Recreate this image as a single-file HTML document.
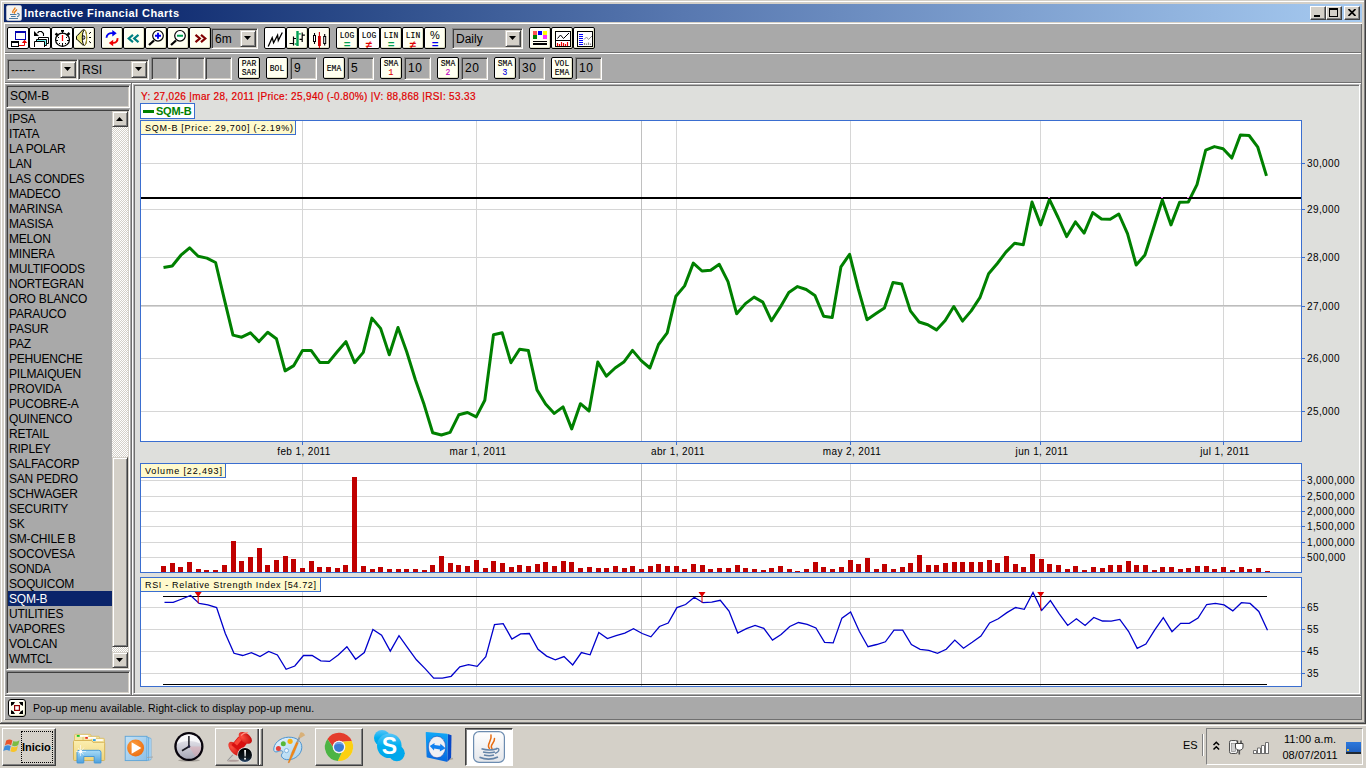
<!DOCTYPE html><html><head><meta charset="utf-8"><title>Interactive Financial Charts</title><style>
*{box-sizing:border-box;margin:0;padding:0}
html,body{width:1366px;height:768px;overflow:hidden;background:#d4d0c8;font-family:"Liberation Sans",sans-serif;font-size:12px;color:#000}
.a,.r{position:absolute}
.r{height:1px}
#title{left:4px;top:4px;width:1358px;height:18px;background:linear-gradient(90deg,#0a246a 0%,#0c276d 8%,#2f4f8c 28%,#5878b0 50%,#a6caf0 100%)}
#title span{position:absolute;left:20px;top:1px;color:#fff;font-weight:bold;font-size:11px;line-height:17px;white-space:nowrap;letter-spacing:0.42px}
.up{border:1px solid;border-color:#d4d0c8 #404040 #404040 #d4d0c8;box-shadow:inset 1px 1px 0 #fff,inset -1px -1px 0 #808080;background:#d4d0c8}
.cap{position:absolute;top:2px;width:16px;height:14px;border-color:#fff #404040 #404040 #fff!important;box-shadow:inset -1px -1px 0 #808080!important}
.btn{position:absolute;width:22px;height:22px;background:#fffff0;border:1px solid #000;border-radius:2px;box-shadow:inset 1px 1px 0 #fff,inset -1px -1px 0 #e0e0c4;overflow:hidden}
.btn.w{background:#fff;box-shadow:none}
.btn svg{position:absolute;left:-1px;top:-1px}
.btn .t{position:absolute;left:-1px;width:22px;text-align:center;font-family:"Liberation Mono",monospace;font-size:9.5px;line-height:9px;white-space:nowrap;transform:scaleX(.84);-webkit-text-stroke:0.15px #000}
.sunk{position:absolute;border:1px solid;border-color:#868686 #fff #fff #868686;box-shadow:inset 1px 1px 0 #404040,inset -1px -1px 0 #d4d0c8;background:#a9a9a9}
.sunk span{position:absolute;white-space:nowrap;font-size:12px;line-height:14px}
.arrow{position:absolute}
.arrow i{position:absolute;width:7px;height:4px;background:#000;clip-path:polygon(0 0,100% 0,50% 100%)}
.arrow i.u{clip-path:polygon(50% 0,100% 100%,0 100%)}
.li{position:absolute;left:1px;width:104px;height:15px;line-height:17px;font-size:12px;padding-left:1px;white-space:nowrap;overflow:hidden;letter-spacing:-0.2px}
.li.sel{background:#0a246a;color:#fff}
.chk{background-image:conic-gradient(#fff 25%,#d4d0c8 0 50%,#fff 0 75%,#d4d0c8 0);background-size:2px 2px}
.lab{position:absolute;background:#fffacd;border:1px solid #3a6ed0;font-size:9px;line-height:14px;white-space:nowrap;padding-left:4px}
.ax{position:absolute;font-size:10px;line-height:10px;letter-spacing:0.38px;white-space:nowrap}
.tb{position:absolute;top:4px;height:38px;width:48px}
.tb.u{border:1px solid;border-color:#fff #404040 #404040 #fff;box-shadow:inset -1px -1px 0 #808080}
.tb.d{border:1px solid;border-color:#404040 #fff #fff #404040;box-shadow:inset 1px 1px 0 #808080;background:#fff}
</style></head><body>
<i class="r" style="left:1px;top:1px;width:1363px;background:#fff"></i>
<i class="a" style="left:1px;top:1px;width:1px;height:721px;background:#fff"></i>
<i class="a" style="left:1364px;top:0px;width:1px;height:724px;background:#808080"></i>
<i class="a" style="left:1365px;top:0px;width:1px;height:724px;background:#404040"></i>
<i class="r" style="left:1px;top:722px;width:1364px;background:#808080"></i>
<i class="r" style="left:0px;top:723px;width:1366px;background:#404040"></i>
<div id="title" class="a">
<svg class="a" style="left:2px;top:1px" width="16" height="16" viewBox="0 0 16 16"><rect x="0.3" y="0.3" width="15.4" height="15.4" rx="2.2" fill="#f4f3f1" stroke="#b8c0d0" stroke-width=".6"/><path d="M6.8 7.5c-.8-2 1.6-2.6 2.2-4.5M8.4 8.2c-.5-1.6 1.7-2 2.2-3.4" stroke="#e8780c" stroke-width="1.3" fill="none" stroke-linecap="round"/><path d="M4 9.5h6.5M5 11.5h4.7M3 13.5h9" stroke="#4c7ca4" stroke-width="1"/><path d="M11.2 8.3c3 .3 2.4 3-.2 3.4" stroke="#4c7ca4" stroke-width="1.2" fill="none"/></svg>
<span>Interactive Financial Charts</span>
<div class="cap up" style="left:1306px"><i class="a" style="left:3px;top:8px;width:6px;height:2px;background:#000"></i></div>
<div class="cap up" style="left:1322px"><i class="a" style="left:2px;top:1px;width:9px;height:9px;border:1px solid #000;border-top-width:2px"></i></div>
<div class="cap up" style="left:1340px"><svg class="a" style="left:3px;top:2px" width="8" height="7" viewBox="0 0 8 7"><path d="M0.5 0L7.5 7M7.5 0L0.5 7" stroke="#000" stroke-width="1.7"/></svg></div>
</div>
<i class="r" style="left:4px;top:23px;width:1358px;background:#fff"></i>
<i class="a" style="left:4px;top:23px;width:1px;height:697px;background:#fff"></i>
<div class="a" style="left:5px;top:24px;width:1356px;height:695px;background:#a9a9a9"></div>
<i class="a" style="left:1361px;top:24px;width:1px;height:696px;background:#707070"></i>
<i class="r" style="left:5px;top:719px;width:1357px;background:#707070"></i>
<i class="r" style="left:5px;top:52px;width:1356px;background:#707070"></i>
<i class="r" style="left:5px;top:53px;width:1356px;background:#fff"></i>
<i class="r" style="left:5px;top:82px;width:1356px;background:#707070"></i>
<i class="r" style="left:5px;top:83px;width:1356px;background:#fff"></i>
<i class="r" style="left:5px;top:695px;width:1356px;background:#707070"></i>
<i class="r" style="left:5px;top:696px;width:1356px;background:#fff"></i>
<div class="btn w" style="left:7px;top:27px"><svg width="22" height="22" viewBox="0 0 22 22"><rect x="8.5" y="4.5" width="10" height="8" fill="#fbfbfb" stroke="#0000b0"/><rect x="8" y="4" width="11" height="2" fill="#0000b0"/><rect x="4.5" y="14.5" width="7" height="5" fill="#fff" stroke="#000"/><rect x="4" y="14" width="8" height="2" fill="#000"/><path d="M12 18.5h5.5v-3" stroke="#e80000" fill="none"/><path d="M17.5 12.8l2.7 3.2h-5.4z" fill="#e80000"/></svg></div>
<div class="btn w" style="left:29px;top:27px"><svg width="22" height="22" viewBox="0 0 22 22"><path d="M5 4v5h5z" fill="#000"/><path d="M8.5 6l1.5-1.5h2.5l2 2v2.5" stroke="#000" fill="none" stroke-width="1.1"/><path d="M9.5 12v-1.5h10v6h-1.5" stroke="#000" fill="#fff"/><path d="M7.5 14v-1.5h10v6h-1.5" stroke="#000" fill="#fff"/><path d="M8 13.5h8.5v4.5" stroke="#70f0f0" stroke-width="1.2" fill="none"/><path d="M5.5 20v-5.5h10v5.5" stroke="#000" fill="#fff"/></svg></div>
<div class="btn w" style="left:51px;top:27px"><svg width="22" height="22" viewBox="0 0 22 22"><ellipse cx="11.5" cy="12.7" rx="6.9" ry="6.6" fill="#fff" stroke="#000" stroke-width="1.3"/><rect x="10" y="3" width="3" height="1.8" fill="#000"/><rect x="11" y="4" width="1" height="2.5" fill="#000"/><path d="M4.5 6.5l2.8 2.3M18.5 6l-2.8 2.6" stroke="#000" stroke-width="2.4"/><path d="M11.5 8v6" stroke="#ff0000" stroke-width="1.3"/><path d="M11.5 16v3M5 13.5h2M16 13.5h2" stroke="#000"/><path d="M7 10h1v1h-1zM15 10h1v1h-1zM8 16h1v1h-1zM14 16h1v1h-1z" fill="#000"/></svg></div>
<div class="btn" style="left:73px;top:27px"><svg width="22" height="22" viewBox="0 0 22 22"><path d="M3.5 9.2v3.2l1 .5 5.2 5h1.6v-15h-1.6l-5.2 5.5z" fill="#e8e478" stroke="#000" stroke-width="1"/><ellipse cx="11.5" cy="10.8" rx="2.2" ry="7.6" fill="#fff" stroke="#000" stroke-width="1"/><path d="M11.8 3.3a2.2 7.6 0 0 1 0 15" stroke="#b8a828" fill="none" stroke-width="1"/><ellipse cx="10.8" cy="10.5" rx="1" ry="1.9" fill="#fff" stroke="#000" stroke-width=".9"/><path d="M16 6.8l2-1.7M16 10.5h2M16 14.3l2 1.7" stroke="#000" stroke-width="1"/></svg></div>
<div class="btn" style="left:101px;top:27px"><svg width="22" height="22" viewBox="0 0 22 22"><path d="M5.5 10.8c0-3.6 3-5.2 6.5-4.5" stroke="#0000f0" stroke-width="1.9" fill="none"/><path d="M11.3 3l4.4 3.3-4.4 3.3z" fill="#0000f0"/><path d="M16.5 11.2c0.4 3.2-2 5-5 4.6" stroke="#f00000" stroke-width="1.9" fill="none"/><path d="M12.2 12.8l-4.4 3.2 4.4 3.2z" fill="#f00000"/></svg></div>
<div class="btn" style="left:123px;top:27px"><svg width="22" height="22" viewBox="0 0 22 22"><path d="M10 7.8l-4.3 3.7 4.3 3.7M15.5 7.8l-4.3 3.7 4.3 3.7" stroke="#008080" stroke-width="2.2" fill="none"/></svg></div>
<div class="btn" style="left:145px;top:27px"><svg width="22" height="22" viewBox="0 0 22 22"><path d="M9 13.5l-5 4.5" stroke="#000" stroke-width="2.3"/><circle cx="13" cy="8.8" r="5.3" fill="#fff" stroke="#000" stroke-width="1.2"/><path d="M10 8.8h6M13 5.8v6" stroke="#0000f0" stroke-width="1.9"/></svg></div>
<div class="btn" style="left:167px;top:27px"><svg width="22" height="22" viewBox="0 0 22 22"><path d="M9 13.5l-5 4.5" stroke="#000" stroke-width="2.3"/><circle cx="13" cy="8.8" r="5.3" fill="#fff" stroke="#000" stroke-width="1.2"/><path d="M10 8.8h6" stroke="#00a050" stroke-width="1.9"/></svg></div>
<div class="btn" style="left:189px;top:27px"><svg width="22" height="22" viewBox="0 0 22 22"><path d="M6.5 7.8l4.3 3.7-4.3 3.7M12 7.8l4.3 3.7-4.3 3.7" stroke="#800000" stroke-width="2.2" fill="none"/></svg></div>
<div class="btn w" style="left:264px;top:27px"><svg width="22" height="22" viewBox="0 0 22 22"><path d="M4.2 19.5l4-8.8 1.4 5 4-7.5 .7 5.3 4-8" stroke="#000" stroke-width="1.3" fill="none"/></svg></div>
<div class="btn" style="left:286px;top:27px"><svg width="22" height="22" viewBox="0 0 22 22"><path d="M7.5 9.5v9M3.5 16.5h4M7.5 11.5h2.5" stroke="#000" stroke-width="1.2"/><path d="M11.5 4v15" stroke="#00a050" stroke-width="2.4"/><path d="M8.7 17h2M12.5 6.8h2.3" stroke="#00a050" stroke-width="1.3"/><path d="M16.2 5.5v9.5M13.5 12.3h2.7M16.2 8.2h2.7" stroke="#000" stroke-width="1.2"/></svg></div>
<div class="btn" style="left:308px;top:27px"><svg width="22" height="22" viewBox="0 0 22 22"><path d="M6.5 6v11M16.7 7v11.5" stroke="#000" stroke-width="1.1"/><rect x="5.5" y="8.5" width="2" height="6" fill="#fff" stroke="#000" stroke-width="1"/><path d="M11.4 5v16" stroke="#d00000" stroke-width="1.1"/><rect x="10" y="9" width="2.8" height="10" fill="#d00000"/><rect x="15.7" y="9.5" width="2" height="7" fill="#fff" stroke="#000" stroke-width="1"/></svg></div>
<div class="btn" style="left:529px;top:27px"><svg width="22" height="22" viewBox="0 0 22 22"><rect x="4" y="4" width="4" height="4" fill="#ff5050"/><rect x="9" y="4" width="4" height="4" fill="#0000ff"/><rect x="14" y="4" width="4" height="4" fill="#ffff00"/><rect x="4" y="8" width="4" height="4" fill="#008000"/><rect x="9" y="8" width="4" height="4" fill="#fff"/><rect x="14" y="8" width="4" height="4" fill="#ff30ff"/><rect x="4" y="14" width="14" height="1" fill="#000"/><rect x="4" y="16" width="14" height="2" fill="#000"/></svg></div>
<div class="btn" style="left:551px;top:27px"><svg width="22" height="22" viewBox="0 0 22 22"><rect x="4.5" y="4.5" width="15" height="15" fill="#fff" stroke="#000"/><path d="M4.5 13.5h15" stroke="#000"/><path d="M6.5 11.5l3-3.5 3 3.5 5.5-5.5" stroke="#000" fill="none"/><path d="M6.5 19v-3M8.5 19v-2M10.5 19v-4M12.5 19v-3M14.5 19v-2M16.5 19v-4" stroke="#f00000" stroke-width="1.2"/></svg></div>
<div class="btn" style="left:573px;top:27px"><svg width="22" height="22" viewBox="0 0 22 22"><rect x="4.5" y="4.5" width="15" height="15" fill="#fff" stroke="#000"/><path d="M6 7.5h4M6 9.5h4M6 11.5h4M6 13.5h4M6 15.5h4M6 17.5h4" stroke="#0000ff" stroke-width="1.2"/><path d="M11 12.5l2.5-2.5 2 2.5 3.5-3.5" stroke="#909090" fill="none"/><path d="M11.5 18v-2M13.5 18v-1.5M15.5 18v-2.5M17.5 18v-1.5" stroke="#909090" stroke-width="1.2"/></svg></div>
<div class="btn" style="left:336px;top:27px"><div class="t" style="top:11px;color:#00a050;font-family:'Liberation Sans',sans-serif;font-size:10px;font-weight:bold;line-height:12px;transform:scaleX(1.15);-webkit-text-stroke:0">=</div><div class="t" style="top:3px">LOG</div></div>
<div class="btn w" style="left:358px;top:27px"><div class="t" style="top:11px;color:#e00000;font-family:'Liberation Sans',sans-serif;font-size:10px;font-weight:bold;line-height:12px;transform:scaleX(1.15);-webkit-text-stroke:0">≠</div><div class="t" style="top:3px">LOG</div></div>
<div class="btn" style="left:380px;top:27px"><div class="t" style="top:11px;color:#00a050;font-family:'Liberation Sans',sans-serif;font-size:10px;font-weight:bold;line-height:12px;transform:scaleX(1.15);-webkit-text-stroke:0">=</div><div class="t" style="top:3px">LIN</div></div>
<div class="btn" style="left:402px;top:27px"><div class="t" style="top:11px;color:#e00000;font-family:'Liberation Sans',sans-serif;font-size:10px;font-weight:bold;line-height:12px;transform:scaleX(1.15);-webkit-text-stroke:0">≠</div><div class="t" style="top:3px">LIN</div></div>
<div class="btn" style="left:424px;top:27px"><div class="t" style="top:11px;color:#0000f0;font-family:'Liberation Sans',sans-serif;font-size:10px;font-weight:bold;line-height:12px;transform:scaleX(1.15);-webkit-text-stroke:0">=</div><div class="t" style="top:2px;font-family:'Liberation Sans',sans-serif;font-size:11px;line-height:10px;transform:none;-webkit-text-stroke:0">%</div></div>
<div class="sunk" style="left:211px;top:28px;width:47px;height:21px"><span style="left:3px;top:3px">6m</span><div class="arrow up" style="left:28px;top:1px;width:16px;height:17px"><i class="" style="left:3px;top:5px"></i></div></div>
<div class="sunk" style="left:452px;top:28px;width:71px;height:21px"><span style="left:3px;top:3px">Daily</span><div class="arrow up" style="left:52px;top:1px;width:16px;height:17px"><i class="" style="left:3px;top:5px"></i></div></div>
<div class="sunk" style="left:7px;top:59px;width:71px;height:21px"><span style="left:3px;top:3px">------</span><div class="arrow up" style="left:52px;top:1px;width:16px;height:17px"><i class="" style="left:3px;top:5px"></i></div></div>
<div class="sunk" style="left:78px;top:59px;width:71px;height:21px"><span style="left:3px;top:3px">RSI</span><div class="arrow up" style="left:52px;top:1px;width:16px;height:17px"><i class="" style="left:3px;top:5px"></i></div></div>
<div class="sunk" style="left:151px;top:57px;width:27px;height:23px"></div>
<div class="sunk" style="left:178px;top:57px;width:27px;height:23px"></div>
<div class="sunk" style="left:205px;top:57px;width:27px;height:23px"></div>
<div class="btn" style="left:238px;top:57px"><div class="t" style="top:1px">PAR</div><div class="t" style="top:10px;color:#000;-webkit-text-stroke-color:#000">SAR</div></div>
<div class="btn" style="left:266px;top:57px"><div class="t" style="top:6px">BOL</div></div>
<div class="sunk" style="left:290px;top:57px;width:27px;height:23px"><span style="left:3px;top:3px;letter-spacing:0.6px">9</span></div>
<div class="btn" style="left:323px;top:57px"><div class="t" style="top:6px">EMA</div></div>
<div class="sunk" style="left:347px;top:57px;width:27px;height:23px"><span style="left:3px;top:3px;letter-spacing:0.6px">5</span></div>
<div class="btn" style="left:380px;top:57px"><div class="t" style="top:1px">SMA</div><div class="t" style="top:10px;color:#e00000;-webkit-text-stroke-color:#e00000">1</div></div>
<div class="sunk" style="left:404px;top:57px;width:27px;height:23px"><span style="left:3px;top:3px;letter-spacing:0.6px">10</span></div>
<div class="btn" style="left:437px;top:57px"><div class="t" style="top:1px">SMA</div><div class="t" style="top:10px;color:#c000c0;-webkit-text-stroke-color:#c000c0">2</div></div>
<div class="sunk" style="left:461px;top:57px;width:27px;height:23px"><span style="left:3px;top:3px;letter-spacing:0.6px">20</span></div>
<div class="btn" style="left:494px;top:57px"><div class="t" style="top:1px">SMA</div><div class="t" style="top:10px;color:#0000e0;-webkit-text-stroke-color:#0000e0">3</div></div>
<div class="sunk" style="left:518px;top:57px;width:27px;height:23px"><span style="left:3px;top:3px;letter-spacing:0.6px">30</span></div>
<div class="btn" style="left:551px;top:57px"><div class="t" style="top:1px">VOL</div><div class="t" style="top:10px;color:#000;-webkit-text-stroke-color:#000">EMA</div></div>
<div class="sunk" style="left:575px;top:57px;width:27px;height:23px"><span style="left:3px;top:3px;letter-spacing:0.6px">10</span></div>
<div class="sunk" style="left:6px;top:85px;width:124px;height:23px"><span style="left:3px;top:3px">SQM-B</span></div>
<div class="sunk" style="left:6px;top:109px;width:124px;height:561px;overflow:hidden">
<div class="li" style="top:1px">IPSA</div>
<div class="li" style="top:16px">ITATA</div>
<div class="li" style="top:31px">LA POLAR</div>
<div class="li" style="top:46px">LAN</div>
<div class="li" style="top:61px">LAS CONDES</div>
<div class="li" style="top:76px">MADECO</div>
<div class="li" style="top:91px">MARINSA</div>
<div class="li" style="top:106px">MASISA</div>
<div class="li" style="top:121px">MELON</div>
<div class="li" style="top:136px">MINERA</div>
<div class="li" style="top:151px">MULTIFOODS</div>
<div class="li" style="top:166px">NORTEGRAN</div>
<div class="li" style="top:181px">ORO BLANCO</div>
<div class="li" style="top:196px">PARAUCO</div>
<div class="li" style="top:211px">PASUR</div>
<div class="li" style="top:226px">PAZ</div>
<div class="li" style="top:241px">PEHUENCHE</div>
<div class="li" style="top:256px">PILMAIQUEN</div>
<div class="li" style="top:271px">PROVIDA</div>
<div class="li" style="top:286px">PUCOBRE-A</div>
<div class="li" style="top:301px">QUINENCO</div>
<div class="li" style="top:316px">RETAIL</div>
<div class="li" style="top:331px">RIPLEY</div>
<div class="li" style="top:346px">SALFACORP</div>
<div class="li" style="top:361px">SAN PEDRO</div>
<div class="li" style="top:376px">SCHWAGER</div>
<div class="li" style="top:391px">SECURITY</div>
<div class="li" style="top:406px">SK</div>
<div class="li" style="top:421px">SM-CHILE B</div>
<div class="li" style="top:436px">SOCOVESA</div>
<div class="li" style="top:451px">SONDA</div>
<div class="li" style="top:466px">SOQUICOM</div>
<div class="li sel" style="top:481px">SQM-B</div>
<div class="li" style="top:496px">UTILITIES</div>
<div class="li" style="top:511px">VAPORES</div>
<div class="li" style="top:526px">VOLCAN</div>
<div class="li" style="top:541px">WMTCL</div>
<div class="a chk" style="left:105px;top:1px;width:16px;height:557px"></div>
<div class="arrow up" style="left:105px;top:1px;width:16px;height:16px"><i class="u" style="left:3px;top:5px"></i></div>
<div class="arrow up" style="left:105px;top:542px;width:16px;height:16px"><i class="" style="left:3px;top:5px"></i></div>
<div class="arrow up" style="left:105px;top:347px;width:16px;height:190px"></div>
</div>
<div class="sunk" style="left:6px;top:671px;width:124px;height:23px"></div>
<i class="a" style="left:131px;top:82px;width:1px;height:614px;background:#707070"></i>
<i class="a" style="left:132px;top:84px;width:1px;height:611px;background:#fff"></i>
<div class="a" style="left:133px;top:84px;width:1227px;height:610px;background:#dedfdc;border:1px solid;border-color:#b4b4b4 #fff #fff #b4b4b4;box-shadow:inset 1px 1px 0 #707070"></div>
<svg class="a" style="left:0;top:0" width="1366" height="768" viewBox="0 0 1366 768">
<rect x="140.5" y="120.5" width="1161" height="321" fill="#fff" stroke="#3a6ed0"/>
<path d="M141 163.5H1301" stroke="#d6d6d6"/><path d="M1302 163.5h3" stroke="#3a6ed0"/>
<path d="M141 209.5H1301" stroke="#d6d6d6"/><path d="M1302 209.5h3" stroke="#3a6ed0"/>
<path d="M141 257.5H1301" stroke="#d6d6d6"/><path d="M1302 257.5h3" stroke="#3a6ed0"/>
<path d="M141 306.5H1301" stroke="#d6d6d6"/><path d="M1302 306.5h3" stroke="#3a6ed0"/>
<path d="M141 358.5H1301" stroke="#d6d6d6"/><path d="M1302 358.5h3" stroke="#3a6ed0"/>
<path d="M141 411.5H1301" stroke="#d6d6d6"/><path d="M1302 411.5h3" stroke="#3a6ed0"/>
<path d="M302.5 121V441" stroke="#d6d6d6"/><path d="M302.5 441v4" stroke="#3a6ed0"/>
<path d="M476.5 121V441" stroke="#d6d6d6"/><path d="M476.5 441v4" stroke="#3a6ed0"/>
<path d="M676.5 121V441" stroke="#d6d6d6"/><path d="M676.5 441v4" stroke="#3a6ed0"/>
<path d="M850.5 121V441" stroke="#d6d6d6"/><path d="M850.5 441v4" stroke="#3a6ed0"/>
<path d="M1040.5 121V441" stroke="#d6d6d6"/><path d="M1040.5 441v4" stroke="#3a6ed0"/>
<path d="M1223.5 121V441" stroke="#d6d6d6"/><path d="M1223.5 441v4" stroke="#3a6ed0"/>
<path d="M141 305.5H1301" stroke="#bdbdbd"/><path d="M641.5 121V441" stroke="#c0c0c0"/>
<polyline points="163.5,267.5 172.2,266.0 180.9,255.2 189.6,247.8 198.2,256.3 206.9,258.1 215.6,262.5 224.3,299.1 233.0,335.1 241.7,337.2 250.4,332.8 259.0,341.6 267.7,332.2 276.4,338.7 285.1,370.9 293.8,365.6 302.5,350.4 311.1,350.4 319.8,362.4 328.5,362.4 337.2,351.8 345.9,341.6 354.6,362.7 363.3,352.4 371.9,318.1 380.6,328.4 389.3,354.8 398.0,327.5 406.7,351.8 415.4,379.7 424.1,404.6 432.7,432.7 441.4,435.0 450.1,432.4 458.8,414.8 467.5,412.5 476.2,416.9 484.8,400.2 493.5,334.8 502.2,332.8 510.9,362.7 519.6,349.2 528.3,350.4 537.0,389.9 545.6,404.0 554.3,413.4 563.0,406.9 571.7,428.9 580.4,403.7 589.1,411.0 597.8,362.1 606.4,376.2 615.1,368.0 623.8,362.1 632.5,350.4 641.2,360.6 649.9,368.0 658.5,344.5 667.2,332.8 675.9,296.2 684.6,285.9 693.3,263.1 702.0,271.0 710.7,270.3 719.3,264.3 728.0,281.6 736.7,313.8 745.4,303.6 754.1,297.1 762.8,302.1 771.5,320.8 780.1,307.4 788.8,292.4 797.5,286.6 806.2,289.5 814.9,295.4 823.6,316.2 832.2,317.6 840.9,266.9 849.6,254.3 858.3,288.9 867.0,319.7 875.7,313.8 884.4,308.0 893.0,282.5 901.7,283.9 910.4,310.9 919.1,322.0 927.8,324.7 936.5,329.9 945.2,320.5 953.8,306.5 962.5,321.1 971.2,310.9 979.9,297.7 988.6,273.7 997.3,263.5 1005.9,252.1 1014.6,243.3 1023.3,244.8 1032.0,202.0 1040.7,224.9 1049.4,199.4 1058.1,217.5 1066.7,236.6 1075.4,221.9 1084.1,233.1 1092.8,212.6 1101.5,219.0 1110.2,219.3 1118.8,214.0 1127.5,233.7 1136.2,265.0 1144.9,255.0 1153.6,227.8 1162.3,200.0 1171.0,224.9 1179.6,202.3 1188.3,202.0 1197.0,184.7 1205.7,150.2 1214.4,146.6 1223.1,148.7 1231.8,158.1 1240.4,134.9 1249.1,135.5 1257.8,147.2 1266.5,175.9" fill="none" stroke="#008000" stroke-width="3" stroke-linejoin="round"/>
<path d="M141 198H1301" stroke="#000" stroke-width="2"/>
<rect x="1048" y="197" width="2" height="1" fill="#f080f0"/>
<rect x="1161" y="197" width="2" height="1" fill="#f080f0"/>
<rect x="1187" y="197" width="2" height="1" fill="#f080f0"/>
<rect x="140.5" y="463.5" width="1161" height="109" fill="#fff" stroke="#3a6ed0"/>
<path d="M141 557.5H1301" stroke="#d6d6d6"/><path d="M1302 557.5h3" stroke="#3a6ed0"/>
<path d="M141 542.5H1301" stroke="#d6d6d6"/><path d="M1302 542.5h3" stroke="#3a6ed0"/>
<path d="M141 526.5H1301" stroke="#d6d6d6"/><path d="M1302 526.5h3" stroke="#3a6ed0"/>
<path d="M141 511.5H1301" stroke="#d6d6d6"/><path d="M1302 511.5h3" stroke="#3a6ed0"/>
<path d="M141 496.5H1301" stroke="#d6d6d6"/><path d="M1302 496.5h3" stroke="#3a6ed0"/>
<path d="M141 480.5H1301" stroke="#d6d6d6"/><path d="M1302 480.5h3" stroke="#3a6ed0"/>
<path d="M302.5 464V572" stroke="#d6d6d6"/>
<path d="M476.5 464V572" stroke="#d6d6d6"/>
<path d="M676.5 464V572" stroke="#d6d6d6"/>
<path d="M850.5 464V572" stroke="#d6d6d6"/>
<path d="M1040.5 464V572" stroke="#d6d6d6"/>
<path d="M1223.5 464V572" stroke="#d6d6d6"/>
<path d="M641.5 464V572" stroke="#c0c0c0"/>
<path d="M161 566h5v6h-5zM170 563h5v9h-5zM178 567h5v5h-5zM187 562h5v10h-5zM196 569h5v3h-5zM204 570h5v2h-5zM213 570h5v2h-5zM222 565h5v7h-5zM231 541h5v31h-5zM239 561h5v11h-5zM248 557h5v15h-5zM257 548h5v24h-5zM265 565h5v7h-5zM274 560h5v12h-5zM283 556h5v16h-5zM291 559h5v13h-5zM300 568h5v4h-5zM309 561h5v11h-5zM317 567h5v5h-5zM326 567h5v5h-5zM335 568h5v4h-5zM343 565h5v7h-5zM352 477h5v95h-5zM361 566h5v6h-5zM370 569h5v3h-5zM378 567h5v5h-5zM387 569h5v3h-5zM396 569h5v3h-5zM404 569h5v3h-5zM413 569h5v3h-5zM422 570h5v2h-5zM430 565h5v7h-5zM439 556h5v16h-5zM448 563h5v9h-5zM456 565h5v7h-5zM465 566h5v6h-5zM474 560h5v12h-5zM483 568h5v4h-5zM491 561h5v11h-5zM500 563h5v9h-5zM509 567h5v5h-5zM517 565h5v7h-5zM526 566h5v6h-5zM535 564h5v8h-5zM543 562h5v10h-5zM552 566h5v6h-5zM561 561h5v11h-5zM569 562h5v10h-5zM578 568h5v4h-5zM587 567h5v5h-5zM596 568h5v4h-5zM604 568h5v4h-5zM613 566h5v6h-5zM622 568h5v4h-5zM630 566h5v6h-5zM639 569h5v3h-5zM648 566h5v6h-5zM656 564h5v8h-5zM665 566h5v6h-5zM674 566h5v6h-5zM682 569h5v3h-5zM691 564h5v8h-5zM700 565h5v7h-5zM708 569h5v3h-5zM717 568h5v4h-5zM726 568h5v4h-5zM735 565h5v7h-5zM743 568h5v4h-5zM752 569h5v3h-5zM761 570h5v2h-5zM769 568h5v4h-5zM778 566h5v6h-5zM787 569h5v3h-5zM795 571h5v1h-5zM804 569h5v3h-5zM813 562h5v10h-5zM821 567h5v5h-5zM830 569h5v3h-5zM839 567h5v5h-5zM848 560h5v12h-5zM856 564h5v8h-5zM865 558h5v14h-5zM874 569h5v3h-5zM882 564h5v8h-5zM891 569h5v3h-5zM900 567h5v5h-5zM908 563h5v9h-5zM917 555h5v17h-5zM926 565h5v7h-5zM934 565h5v7h-5zM943 563h5v9h-5zM952 562h5v10h-5zM960 562h5v10h-5zM969 562h5v10h-5zM978 562h5v10h-5zM987 560h5v12h-5zM995 563h5v9h-5zM1004 556h5v16h-5zM1013 564h5v8h-5zM1021 567h5v5h-5zM1030 554h5v18h-5zM1039 559h5v13h-5zM1047 564h5v8h-5zM1056 565h5v7h-5zM1065 569h5v3h-5zM1073 566h5v6h-5zM1082 570h5v2h-5zM1091 567h5v5h-5zM1100 568h5v4h-5zM1108 565h5v7h-5zM1117 565h5v7h-5zM1126 561h5v11h-5zM1134 565h5v7h-5zM1143 565h5v7h-5zM1152 570h5v2h-5zM1160 567h5v5h-5zM1169 567h5v5h-5zM1178 569h5v3h-5zM1186 568h5v4h-5zM1195 566h5v6h-5zM1204 566h5v6h-5zM1212 569h5v3h-5zM1221 567h5v5h-5zM1230 570h5v2h-5zM1239 567h5v5h-5zM1247 569h5v3h-5zM1256 568h5v4h-5zM1265 571h5v1h-5z" fill="#c00000"/><path d="M140 572.5H1302" stroke="#3a6ed0"/>
<rect x="140.5" y="577.5" width="1161" height="109" fill="#fff" stroke="#3a6ed0"/>
<path d="M141 607.5H1301" stroke="#d6d6d6"/><path d="M1302 607.5h3" stroke="#3a6ed0"/>
<path d="M141 629.5H1301" stroke="#d6d6d6"/><path d="M1302 629.5h3" stroke="#3a6ed0"/>
<path d="M141 651.5H1301" stroke="#d6d6d6"/><path d="M1302 651.5h3" stroke="#3a6ed0"/>
<path d="M141 673.5H1301" stroke="#d6d6d6"/><path d="M1302 673.5h3" stroke="#3a6ed0"/>
<path d="M302.5 578V686" stroke="#d6d6d6"/>
<path d="M476.5 578V686" stroke="#d6d6d6"/>
<path d="M676.5 578V686" stroke="#d6d6d6"/>
<path d="M850.5 578V686" stroke="#d6d6d6"/>
<path d="M1040.5 578V686" stroke="#d6d6d6"/>
<path d="M1223.5 578V686" stroke="#d6d6d6"/>
<path d="M641.5 578V686" stroke="#c0c0c0"/>
<path d="M163 596.5H1267M163 684.5H1267" stroke="#000"/>
<polyline points="164.5,602.3 173.2,602.3 181.9,599.0 190.6,595.5 199.2,603.4 207.9,604.9 216.6,607.6 225.3,633.5 234.0,653.3 242.7,655.5 251.4,652.6 260.0,656.6 268.7,651.5 277.4,655.0 286.1,669.3 294.8,666.0 303.5,655.5 312.1,655.5 320.8,660.9 329.5,661.4 338.2,655.0 346.9,646.7 355.6,659.2 364.3,652.6 372.9,629.5 381.6,635.3 390.3,651.1 399.0,635.7 407.7,647.8 416.4,659.8 425.1,668.6 433.7,678.1 442.4,678.1 451.1,676.3 459.8,666.9 468.5,664.7 477.2,666.4 485.8,656.6 494.5,624.7 503.2,623.6 511.9,639.0 520.6,633.9 529.3,633.5 538.0,649.3 546.6,656.1 555.3,659.8 564.0,656.6 572.7,664.9 581.4,652.6 590.1,654.8 598.8,632.4 607.4,638.5 616.1,635.7 624.8,633.1 633.5,628.7 642.2,633.5 650.9,636.8 659.5,626.5 668.2,623.0 676.9,607.6 685.6,604.5 694.3,597.3 703.0,602.7 711.7,602.1 720.3,600.3 729.0,611.0 737.7,633.1 746.4,628.7 755.1,625.4 763.8,628.4 772.5,640.1 781.1,634.6 789.8,626.5 798.5,622.5 807.2,624.3 815.9,628.0 824.6,642.3 833.2,642.9 841.9,618.1 850.6,612.0 859.3,631.3 868.0,646.7 876.7,644.5 885.4,641.8 894.0,630.2 902.7,630.2 911.4,644.5 920.1,649.3 928.8,650.4 937.5,653.3 946.2,649.3 954.8,640.1 963.5,648.2 972.2,642.3 980.9,636.1 989.6,623.0 998.3,618.8 1006.9,612.6 1015.6,607.5 1024.3,609.3 1033.0,592.4 1041.7,610.4 1050.4,600.6 1059.1,613.7 1067.7,625.4 1076.4,618.8 1085.1,625.4 1093.8,617.5 1102.5,621.0 1111.2,621.2 1119.8,619.4 1128.5,631.3 1137.2,648.4 1145.9,644.0 1154.6,630.2 1163.3,617.7 1172.0,631.7 1180.6,623.4 1189.3,623.4 1198.0,618.1 1206.7,604.5 1215.4,603.4 1224.1,604.9 1232.8,610.9 1241.4,602.7 1250.1,603.4 1258.8,611.5 1267.5,630.2" fill="none" stroke="#0000cc" stroke-width="1.3"/>
<path d="M194.7 592h7l-3.5 5z" fill="#e00000"/><path d="M198.2 596V603.4" stroke="#e00000"/>
<path d="M698.5 592h7l-3.5 5z" fill="#e00000"/><path d="M702.0 596V602.7" stroke="#e00000"/>
<path d="M1037.2 592h7l-3.5 5z" fill="#e00000"/><path d="M1040.7 596V610.4" stroke="#e00000"/>
</svg>
<div class="ax" style="left:141px;top:92px;color:#e00000;letter-spacing:0.33px;-webkit-text-stroke:0.2px #e00000">Y: 27,026 |mar 28, 2011 |Price: 25,940 (-0.80%) |V: 88,868 |RSI: 53.33</div>
<div class="a" style="left:140px;top:103px;width:55px;height:16px;background:#fff;border:1px solid #3a6ed0"><i class="a" style="left:2px;top:6px;width:11px;height:3px;background:#008000"></i><span class="a" style="left:15px;top:1px;font-size:11px;line-height:12px;font-weight:bold;color:#008000;letter-spacing:-0.25px">SQM-B</span></div>
<div class="lab" style="left:140px;top:120px;width:156px;height:15px;letter-spacing:0.72px">SQM-B [Price: 29,700] (-2.19%)</div>
<div class="lab" style="left:140px;top:463px;width:86px;height:15px;letter-spacing:0.85px">Volume [22,493]</div>
<div class="lab" style="left:140px;top:577px;width:181px;height:15px;letter-spacing:0.68px">RSI - Relative Strength Index [54.72]</div>
<div class="ax" style="left:1307px;top:159px">30,000</div>
<div class="ax" style="left:1307px;top:205px">29,000</div>
<div class="ax" style="left:1307px;top:253px">28,000</div>
<div class="ax" style="left:1307px;top:302px">27,000</div>
<div class="ax" style="left:1307px;top:354px">26,000</div>
<div class="ax" style="left:1307px;top:407px">25,000</div>
<div class="ax" style="left:1307px;top:553px">500,000</div>
<div class="ax" style="left:1307px;top:538px">1,000,000</div>
<div class="ax" style="left:1307px;top:522px">1,500,000</div>
<div class="ax" style="left:1307px;top:507px">2,000,000</div>
<div class="ax" style="left:1307px;top:492px">2,500,000</div>
<div class="ax" style="left:1307px;top:476px">3,000,000</div>
<div class="ax" style="left:1307px;top:603px">65</div>
<div class="ax" style="left:1307px;top:625px">55</div>
<div class="ax" style="left:1307px;top:647px">45</div>
<div class="ax" style="left:1307px;top:669px">35</div>
<div class="ax" style="left:263px;top:447px;width:82px;text-align:center">feb 1, 2011</div>
<div class="ax" style="left:437px;top:447px;width:82px;text-align:center">mar 1, 2011</div>
<div class="ax" style="left:637px;top:447px;width:82px;text-align:center">abr 1, 2011</div>
<div class="ax" style="left:811px;top:447px;width:82px;text-align:center">may 2, 2011</div>
<div class="ax" style="left:1001px;top:447px;width:82px;text-align:center">jun 1, 2011</div>
<div class="ax" style="left:1184px;top:447px;width:82px;text-align:center">jul 1, 2011</div>
<div class="btn" style="left:8px;top:699px;width:18px;height:18px;border-radius:3px"><svg width="18" height="18" viewBox="0 0 18 18"><rect x="6.6" y="6.6" width="4.8" height="4.8" fill="#fff" stroke="#900000" stroke-width="1.2"/><path d="M3 3h4l-1.5 2.5-2.5 1.5zM15 3h-4l1.5 2.5 2.5 1.5zM3 15h4l-1.5-2.5-2.5-1.5zM15 15h-4l1.5-2.5 2.5-1.5z" fill="#000"/></svg></div>
<div class="a" style="left:33px;top:701px;font-size:10.5px;line-height:14px;white-space:nowrap;letter-spacing:0.08px">Pop-up menu available. Right-click to display pop-up menu.</div>
<div class="a" style="left:0;top:724px;width:1366px;height:44px;background:#d4d0c8">
<i class="r" style="left:0;top:1px;width:1366px;background:#fff"></i>
<div class="tb u" style="left:2px;width:54px"><span class="a" style="left:19px;top:11px;font-weight:bold;font-size:11px;line-height:14px;letter-spacing:0px">Inicio</span><i class="a" style="left:18px;top:2px;width:32px;height:32px;border:1px dotted #000"></i></div>
<div class="tb u" style="left:215px"></div><i class="a" style="left:257px;top:5px;width:1px;height:36px;background:#808080"></i><i class="a" style="left:258px;top:5px;width:1px;height:36px;background:#404040"></i><i class="a" style="left:259px;top:5px;width:1px;height:36px;background:#fff"></i>
<div class="tb u" style="left:315px"></div>
<div class="tb d" style="left:465px"></div>
<div class="a" style="left:1183px;top:14px;font-size:11px;line-height:14px">ES</div>
<i class="a" style="left:1202px;top:10px;width:1px;height:22px;background:#808080"></i><i class="a" style="left:1203px;top:10px;width:1px;height:22px;background:#fff"></i>
<div class="a" style="left:1206px;top:4px;width:157px;height:37px;border:1px solid;border-color:#808080 #fff #fff #808080">
<svg class="a" style="left:4px;top:9px" width="70" height="18" viewBox="0 0 70 18"><path d="M2.5 7l2.8-2.8 2.8 2.8M2.5 11.5l2.8-2.8 2.8 2.8" stroke="#000" stroke-width="1.5" fill="none"/><rect x="18.5" y="2.5" width="8" height="13" rx="1.8" fill="#f4f4f4" stroke="#505050"/><rect x="20.5" y="5.5" width="4" height="8" fill="#d0d0d0" stroke="#808080" stroke-width=".6"/><path d="M24.5 5.5h7.5v3.5c0 2-1.7 3.2-3.7 3.2s-3.8-1.2-3.8-3.2z" fill="#fff" stroke="#404040"/><path d="M26.5 2.5v3M30 2.5v3" stroke="#404040" stroke-width="1.4"/><path d="M28.3 12v4.5" stroke="#505050" stroke-width="1.6"/><path d="M42.5 15.5v-3h3v3M46.5 15.5v-5.5h3v5.5M50.5 15.5v-8h3v8M54.5 15.5v-11h3v11z" fill="#fff" stroke="#707070"/><path d="M42 15.5h16" stroke="#707070"/></svg>
<div class="a" style="left:71px;top:3px;width:64px;text-align:center;font-size:11px;line-height:14px;letter-spacing:0.1px">11:00 a.m.</div>
<div class="a" style="left:71px;top:19px;width:64px;text-align:center;font-size:11px;line-height:14px;letter-spacing:0.1px">08/07/2011</div>
<div class="a" style="left:139px;top:13px;width:15px;height:12px;background:linear-gradient(#2c78dc,#2060c0);border-bottom:2px solid #202830"><i class="a" style="left:1px;top:7px;width:2px;height:2px;background:#e0c040"></i></div>
</div></div>
<svg class="a" style="left:0;top:724px" width="1366" height="44" viewBox="0 724 1366 44"><defs>
<linearGradient id="gf" x1="0" y1="0" x2="0" y2="1"><stop offset="0" stop-color="#fbeeb0"/><stop offset="1" stop-color="#efd47c"/></linearGradient>
<linearGradient id="gb" x1="0" y1="0" x2="0" y2="1"><stop offset="0" stop-color="#a8dcf8"/><stop offset="1" stop-color="#4ea0dc"/></linearGradient>
<linearGradient id="gw" x1="0" y1="0" x2="1" y2="1"><stop offset="0" stop-color="#c4e2f6"/><stop offset="1" stop-color="#8cc0e8"/></linearGradient>
<radialGradient id="go" cx=".4" cy=".35" r=".7"><stop offset="0" stop-color="#fca040"/><stop offset="1" stop-color="#ec6c10"/></radialGradient>
<linearGradient id="gc" x1="0" y1="0" x2="0" y2="1"><stop offset="0" stop-color="#f4f4f8"/><stop offset="1" stop-color="#a8a8b8"/></linearGradient>
<radialGradient id="gr" cx=".35" cy=".3" r=".8"><stop offset="0" stop-color="#ff5040"/><stop offset="1" stop-color="#c00808"/></radialGradient>
<linearGradient id="gk" x1="0" y1="0" x2="0" y2="1"><stop offset="0" stop-color="#000"/><stop offset=".7" stop-color="#101820"/><stop offset="1" stop-color="#28486c"/></linearGradient>
<linearGradient id="gs" x1="0" y1="0" x2="0" y2="1"><stop offset="0" stop-color="#58c4f8"/><stop offset=".5" stop-color="#00aff0"/><stop offset="1" stop-color="#00a4e8"/></linearGradient>
<linearGradient id="gt" x1="0" y1="0" x2="0" y2="1"><stop offset="0" stop-color="#10a8f8"/><stop offset="1" stop-color="#0868e0"/></linearGradient>
<linearGradient id="gj" x1="0" y1="0" x2="0" y2="1"><stop offset="0" stop-color="#fff"/><stop offset="1" stop-color="#e4e6ea"/></linearGradient>
<linearGradient id="gp" x1="0" y1="0" x2="1" y2="1"><stop offset="0" stop-color="#e4f2fc"/><stop offset="1" stop-color="#a8d4f0"/></linearGradient>
</defs><path d="M6.2 740.6c2.2-1.4 4.2-1.3 6.2-.2l-1.3 4.8c-2-1.1-3.8-1.2-6.2.2z" fill="#e8542c"/><path d="M13.3 740.9c2 1 3.8 1 6.2-.6l-1.3 4.8c-2.4 1.5-4.2 1.5-6.2.5z" fill="#7cbc44"/><path d="M4.6 746.3c2.3-1.4 4.2-1.3 6.2-.2l-1.3 4.8c-2-1.1-3.8-1.2-6.2.2z" fill="#3c8cdc"/><path d="M11.7 746.6c2 1 3.8 1 6.2-.6l-1.3 4.8c-2.4 1.5-4.2 1.5-6.2.5z" fill="#f8c428"/><rect x="74.5" y="734.3" width="16.5" height="12" rx="1.2" fill="#f6e6a4" stroke="#d8ba60" stroke-width=".8"/><rect x="83" y="736.3" width="16.5" height="12" rx="1.2" fill="#f6e6a4" stroke="#d8ba60" stroke-width=".8"/><rect x="91.3" y="738.3" width="13.2" height="12" rx="1.2" fill="#f6e6a4" stroke="#d8ba60" stroke-width=".8"/><rect x="76.8" y="735" width="3" height="1.8" fill="#18c828"/><rect x="79.8" y="735" width="8.5" height="1.8" fill="#fff"/><rect x="85.3" y="737" width="2.6" height="1.8" fill="#e83020"/><rect x="87.9" y="737" width="8" height="1.8" fill="#fff"/><rect x="93" y="739.2" width="2.8" height="1.7" fill="#1898f0"/><rect x="95.8" y="739.2" width="7" height="1.7" fill="#fff"/><path d="M73.5 741.5q0-1 1-1h17l1.5 1.8h10.7q1 0 1 1v16.2q0 1-1 1h-29.2q-1 0-1-1z" fill="url(#gf)" stroke="#d4b050" stroke-width=".9"/><path d="M77 752.5q0-2.2 2.2-2.2h19.6q2.2 0 2.2 2.2v10q0 .5-.5 .5h-5.8q-.5 0-.5-.5v-6h-10.4v6q0 .5-.5 .5h-5.8q-.5 0-.5-.5z" fill="url(#gb)" stroke="#3c94d8" stroke-width=".9"/><path d="M80.5 745v11M76 751.5h10M78 748l5.5 6.5M84 747.5l-5 6" stroke="#fff" stroke-width=".7" opacity=".9"/><circle cx="80.7" cy="751.7" r="1.6" fill="#fff"/><path d="M148.5 737.5l2.5 1v21l-2.5 1zM146.5 737l2.5 .8v22l-2.5 .8z" fill="#c8e4f8" stroke="#60a8dc" stroke-width=".7"/><rect x="125.2" y="736.3" width="21.8" height="24.3" fill="url(#gw)" stroke="#5ca4d8" stroke-width=".9"/><circle cx="135.6" cy="747.9" r="8.5" fill="url(#go)"/><path d="M131.6 742.2v11.6l9.8-5.8z" fill="#fff"/><path d="M147 757.5l6-.5" stroke="#a0a0a0" stroke-width=".8"/><ellipse cx="189" cy="760.3" rx="11" ry="1.3" fill="#807c74" opacity=".6"/><circle cx="188.9" cy="746.5" r="14.6" fill="#08040c"/><circle cx="188.9" cy="746.5" r="12.3" fill="url(#gc)"/><path d="M188.9 746.5h12.1a12.3 12.3 0 0 1-5.5 10.3z" fill="#e0a0a8" opacity=".4"/><path d="M176.9 744a12.3 12.3 0 0 1 24 0a18 12 0 0 0-24 0z" fill="#fff" opacity=".7"/><path d="M188.9 736v10.5" stroke="#181820" stroke-width="1.5"/><path d="M189.5 746.2l-7.5 4.5" stroke="#181820" stroke-width="1.7"/><circle cx="189" cy="746.5" r="1.3" fill="#202040"/><ellipse cx="233" cy="760.8" rx="6" ry="1" fill="#a08888" opacity=".7"/><path d="M233 755l-5.2 5.8" stroke="#989898" stroke-width="1.5"/><path d="M233.4 755.3l-5 5.6" stroke="#e0e0e0" stroke-width=".6"/><ellipse cx="234.6" cy="748.8" rx="4.3" ry="8.3" transform="rotate(-40 234.6 748.8)" fill="url(#gr)"/><path d="M231.5 745l7-8.5 8.5 7-7 8.5z" fill="#d81010"/><path d="M234 743l5-6 3 2.5-5 6z" fill="#f84838"/><ellipse cx="245.3" cy="737.8" rx="4.6" ry="7.6" transform="rotate(-52 245.3 737.8)" fill="url(#gr)"/><path d="M241 735.5q3-3.5 7-2.8" stroke="#ff9080" stroke-width="1.2" fill="none"/><circle cx="245" cy="755" r="7.7" fill="#e8e8e8"/><circle cx="245" cy="755" r="7" fill="url(#gk)"/><path d="M244.2 750h1.8l-.4 6.5h-1z" fill="#fff"/><rect x="244.2" y="757.8" width="1.7" height="1.8" fill="#fff"/><path d="M273.8 750.5c-.8-7 6.5-13 14.5-13.3 8-.3 13.8 4 13.5 10.5-.3 6.5-6.5 11.5-12.5 12-4 .3-6.2-.8-7.5-2.8-.8-1.3-.3-2.8.6-3.6 1-1 .5-2.5-1-2.6-2.2-.2-3.8 1.5-5.5 1.2-1.2-.2-2-1-2.1-1.4z" fill="url(#gp)" stroke="#4c94d0" stroke-width="1"/><circle cx="278.4" cy="748.6" r="2.5" fill="#e84038"/><circle cx="283.3" cy="743.7" r="2.5" fill="#58b838"/><circle cx="290.1" cy="741.3" r="2.6" fill="#f8b010"/><circle cx="286.5" cy="750.6" r="2.1" fill="#eef6fc" stroke="#78b0dc" stroke-width=".9"/><path d="M288.2 762.5q3-10 8.3-20.5l1.8 .8q-4 11-9.3 20.2z" fill="#f08818" stroke="#d87010" stroke-width=".4"/><path d="M296.4 742l2.4-5.2 1.7 .8-2.3 5.2z" fill="#9098a0"/><path d="M298.6 737l1.8-4.5q2.5-1.3 4.8 2.8l-4.6 2.7z" fill="#d8b078"/><circle cx="339" cy="747" r="14.1" fill="#e8e4dc"/><path d="M332.8 746.7L327.4 738.9A14.1 14.1 0 0 1 351.8 741.0L342.4 741.8A6.2 6.2 0 0 0 332.8 746.7z" fill="#e43c2c"/><path d="M342.4 741.8L351.8 741.0A14.1 14.1 0 0 1 337.8 761.0L341.8 752.5A6.2 6.2 0 0 0 342.4 741.8z" fill="#fcd010"/><path d="M341.8 752.5L337.8 761.0A14.1 14.1 0 0 1 327.4 738.9L332.8 746.7A6.2 6.2 0 0 0 341.8 752.5z" fill="#4cb444"/><circle cx="339" cy="747" r="6.2" fill="#f4f4f4"/><circle cx="339" cy="747" r="5" fill="#3c7cd4"/><path d="M334.8 745a4.5 4.5 0 0 1 8.4 0a7 5 0 0 0-8.4 0z" fill="#88b4ec" opacity=".7"/><circle cx="382" cy="738" r="8" fill="url(#gs)"/><circle cx="396.8" cy="753.3" r="8" fill="#00a8ec"/><circle cx="389.3" cy="745.7" r="12.3" fill="url(#gs)"/><text x="389.4" y="754.2" text-anchor="middle" font-family="'Liberation Sans',sans-serif" font-weight="bold" font-size="23" fill="#fff">S</text><path d="M447 760l6-1.5" stroke="#908c84" stroke-width="1.5" opacity=".6"/><path d="M447.8 734l3.7 1.3-.4 22.5-3.7 4z" fill="#0848c8"/><path d="M425.7 732.6q0-.8 .8-.7l20.5 1.8q.8 .1 .8 .9l-.4 26.5q0 .8-.8 .6l-19.2-4.3q-.8-.2-.8-1z" fill="url(#gt)"/><ellipse cx="437" cy="747" rx="8.6" ry="10.8" fill="#f0f0f4" stroke="#1030a0" stroke-width=".5"/><path d="M429.8 745.9l4.8-2.8-.2 1.9 5.8 .8 .2-2 5.2 4.4-5.8 3.2 .2-2-5.8-.8-.2 2z" fill="#1080f0"/><rect x="473.6" y="731.6" width="30.8" height="30.8" rx="5.5" fill="url(#gj)" stroke="#6c8cb0" stroke-width="1.2"/><path d="M489.5 748.5c-4-4 3-7 1.5-13.5M492 748.5c-3-3.5 3-5.5 2.5-10" stroke="#e86c10" stroke-width="1.5" fill="none" stroke-linecap="round"/><path d="M481.5 748.8q8 2.3 15.5 0M483 752q6.5 1.6 12 0M484 755q5.5 1.3 10 0" stroke="#6484a8" stroke-width="1.5" fill="none"/><path d="M496 748.5c4-1 4 3.5-1 4.8" stroke="#6484a8" stroke-width="1.3" fill="none"/><path d="M479.5 757.3q9.5 3.8 18.5-.3" stroke="#6484a8" stroke-width="1.6" fill="none"/></svg>
</body></html>
